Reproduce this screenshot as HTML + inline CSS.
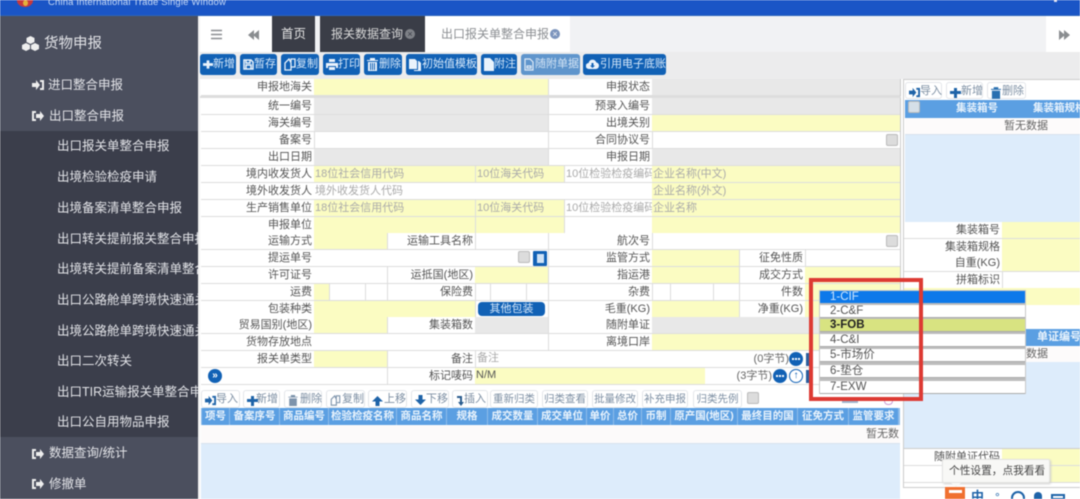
<!DOCTYPE html>
<html lang="zh"><head><meta charset="utf-8"><title>货物申报</title>
<style>
html,body{margin:0;padding:0;width:1080px;height:499px;overflow:hidden;background:#fff}
#r{position:relative;width:1080px;height:499px;overflow:hidden;filter:blur(.5px);font:11px/17px "Liberation Sans","Noto Sans CJK SC",sans-serif;color:#555}
#r div,#r span.a{position:absolute;white-space:nowrap;box-sizing:border-box}
.m{color:#e3e4e8;font-size:12.5px;line-height:18px}
.b{top:54px;height:21px;background:#1161b5;border-radius:3px;color:#d6e8fa;font-size:11px;line-height:21px;padding-left:14px}
.b svg,.t svg{position:absolute;left:3px;top:4px}
.l{text-align:right;padding-right:2px;height:17px;border-bottom:1px solid #ddd;background:#fff}
.y{background:#fbfcc2;height:17px;border-bottom:1px solid #ddd;color:#aaa;padding-left:1px}
.g{background:#e8e8e8;height:17px;border-bottom:1px solid #ddd}
.w{background:#fff;height:17px;border-bottom:1px solid #ddd;border-left:1px solid #ddd;color:#aaa;padding-left:1px}
.c{width:12px;height:12px;background:#dcdcdc;border:1px solid #bbb;border-radius:2px}
.t{top:390px;height:18px;border:1px solid #e3e6ea;border-radius:3px;background:#fff;color:#7d8fa3;font-size:11px;line-height:17px;padding-left:14px}
.tt{padding-left:0;text-align:center;font-size:10.5px}
.h{top:408px;height:17px;background:#5b9fe2;color:#e9f3fc;font-weight:bold;font-size:10.5px;line-height:17px;text-align:center}
.o{left:820px;width:205px;height:13px;background:#fff;color:#555;font-size:11.5px;line-height:13px;padding-left:10px;border-bottom:1px solid #aaa}
.ci{width:14px;height:14px;border-radius:50%;background:#1161b5}
.x{width:10px;height:10px;border-radius:50%;color:#fff;font-size:9px;line-height:10px;text-align:center}
</style></head><body><div id="r">

<!-- top bar -->
<div style="left:0;top:0;width:1080px;height:16px;background:#1a55c6;border-bottom:1px solid #2a63bb"></div>
<div style="left:17px;top:-6px;width:16px;height:13px;border-radius:50%;background:#c7393d"></div>
<div style="left:23px;top:0;width:5px;height:6px;background:#e3b23c;border-radius:50%"></div>
<div style="left:48px;top:-6px;color:#c6d9f5;font-size:9.5px;letter-spacing:.15px">China International Trade Single Window</div>
<div style="left:1054px;top:0;width:3px;height:2px;background:#dde"></div>

<!-- sidebar -->
<div style="left:0;top:16px;width:198px;height:483px;background:#4b4f5e"></div>
<div style="left:0;top:131px;width:198px;height:306px;background:#3b3e4b"></div>
<div style="left:198px;top:16px;width:2px;height:483px;background:#f3f3f3"></div>
<svg style="position:absolute;left:22px;top:36px" width="17" height="15" viewBox="0 0 17 15"><path fill="#eee" d="M8.5 0l4 2v4l-4 2-4-2V2zM4 7l4 2v4l-4 2-4-2V9zM13 7l4 2v4l-4 2-4-2V9z"/></svg>
<div class="m" style="left:44px;top:34px;font-size:14.5px;line-height:20px">货物申报</div>
<svg style="position:absolute;left:32px;top:79px" width="12" height="12" viewBox="0 0 12 12"><path fill="#eee" d="M0 4h4V1l4 5-4 5V8H0zM8 1h4v10H8v-2h2V3H8z"/></svg>
<div class="m" style="left:48px;top:76px">进口整合申报</div>
<svg style="position:absolute;left:32px;top:110px" width="12" height="12" viewBox="0 0 12 12"><path fill="#eee" d="M4 1H0v10h4V9H2V3h2zM4 4h4V1l4 5-4 5V8H4z"/></svg>
<div class="m" style="left:49px;top:107px">出口整合申报</div>
<div class="m" style="left:57px;top:137px">出口报关单整合申报</div>
<div class="m" style="left:57px;top:168px">出境检验检疫申请</div>
<div class="m" style="left:57px;top:199px">出境备案清单整合申报</div>
<div style="left:57px;top:230px;width:141px;height:18px;overflow:hidden"><span class="m">出口转关提前报关整合申报</span></div>
<div style="left:57px;top:260px;width:141px;height:18px;overflow:hidden"><span class="m">出境转关提前备案清单整合</span></div>
<div style="left:57px;top:291px;width:141px;height:18px;overflow:hidden"><span class="m">出口公路舱单跨境快速通关</span></div>
<div style="left:57px;top:322px;width:141px;height:18px;overflow:hidden"><span class="m">出境公路舱单跨境快速通关</span></div>
<div class="m" style="left:57px;top:352px">出口二次转关</div>
<div style="left:57px;top:383px;width:141px;height:18px;overflow:hidden"><span class="m">出口TIR运输报关单整合申报</span></div>
<div class="m" style="left:57px;top:413px">出口公自用物品申报</div>
<svg style="position:absolute;left:32px;top:448px" width="12" height="12" viewBox="0 0 12 12"><path fill="#eee" d="M4 1H0v10h4V9H2V3h2zM4 4h4V1l4 5-4 5V8H4z"/></svg>
<div class="m" style="left:49px;top:444px">数据查询/统计</div>
<svg style="position:absolute;left:32px;top:478px" width="12" height="12" viewBox="0 0 12 12"><path fill="#eee" d="M4 1H0v10h4V9H2V3h2zM4 4h4V1l4 5-4 5V8H4z"/></svg>
<div class="m" style="left:49px;top:475px">修撤单</div>

<!-- tabs -->
<div style="left:200px;top:16px;width:880px;height:36px;background:#f1f2f4"></div>
<div style="left:200px;top:16px;width:72px;height:36px;background:#fff"></div>
<svg style="position:absolute;left:211px;top:29px" width="11" height="11" viewBox="0 0 11 11"><path stroke="#8a8d90" stroke-width="1.6" d="M0 1.5h11M0 5.5h11M0 9.5h11"/></svg>
<svg style="position:absolute;left:248px;top:30px" width="11" height="10" viewBox="0 0 11 10"><path fill="#8a8d90" d="M6 0v10L0 5zM11 0v10L5 5z"/></svg>
<div style="left:272px;top:16px;width:43px;height:36px;background:#3a3d47;color:#e5e5e5;font-size:12.5px;line-height:36px;text-align:center">首页</div>
<div style="left:320px;top:16px;width:105px;height:36px;background:#3a3d47;color:#d8d8d8;font-size:12px;line-height:36px;padding-left:11px">报关数据查询</div>
<div class="x" style="left:405px;top:29px;background:#7e8187;color:#3a3d47">×</div>
<div style="left:425px;top:16px;width:145px;height:36px;background:#fff;color:#8c8f93;font-size:12px;line-height:36px;padding-left:16px">出口报关单整合申报</div>
<div class="x" style="left:550px;top:29px;background:#7d95bd">×</div>
<div style="left:1046px;top:16px;width:34px;height:36px;background:#fff"></div>
<svg style="position:absolute;left:1059px;top:30px" width="11" height="10" viewBox="0 0 11 10"><path fill="#8a8d90" d="M0 0v10l6-5zM5 0v10l6-5z"/></svg>

<!-- toolbar -->
<div style="left:200px;top:52px;width:880px;height:27px;background:#ececed"></div>
<div class="b" style="left:200px;width:36px;padding-left:13px"><svg width="10" height="13" viewBox="0 0 11 13"><path fill="#eaf3fc" d="M4 2h3v3h4v3H7v3H4V8H0V5h4z"/></svg>新增</div>
<div class="b" style="left:240px;width:37px"><svg width="11" height="13" viewBox="0 0 11 13"><path fill="none" stroke="#eaf3fc" stroke-width="1.5" d="M1 2h7l2 2v7H1zM3 2v3h4V2M3 11V7h5v4"/></svg>暂存</div>
<div class="b" style="left:281px;width:38px;padding-left:15px"><svg width="12" height="13" viewBox="0 0 12 13"><path fill="none" stroke="#eaf3fc" stroke-width="1.3" d="M5 1L1 5v7h6V5zM7 4V1h4v8H7"/></svg>复制</div>
<div class="b" style="left:323px;width:37px;padding-left:15px"><svg width="12" height="13" viewBox="0 0 12 13"><path fill="#eaf3fc" d="M3 1h6v3H3zM0 5h12v5h-2V8H2v2H0zM3 9h6v3H3z"/></svg>打印</div>
<div class="b" style="left:364px;width:38px;padding-left:15px"><svg width="11" height="13" viewBox="0 0 11 13"><path fill="#eaf3fc" d="M0 2h3V0h5v2h3v1H0zM1 4h9v9H1z"/><path stroke="#1161b5" d="M3.5 5v7M5.5 5v7M7.5 5v7"/></svg>删除</div>
<div class="b" style="left:406px;width:71px;padding-left:16px"><svg width="12" height="13" viewBox="0 0 12 13"><path fill="#eaf3fc" d="M0 1h6l2 2v8H0zM9 3h1l2 2v8H5v-1h4z"/></svg>初始值模板</div>
<div class="b" style="left:481px;width:36px;padding-left:13px"><svg width="10" height="13" viewBox="0 0 10 13"><path fill="#eaf3fc" d="M0 0h6l4 4v9H0z"/></svg>附注</div>
<div class="b" style="left:521px;width:59px;background:#5f95cc;color:#d2e3f4"><svg width="10" height="13" viewBox="0 0 10 13"><path fill="none" stroke="#dfeaf6" stroke-width="1.2" d="M1 1h5l3 3v8H1zM3 8h4v2H3z"/></svg>随附单据</div>
<div class="b" style="left:583px;width:83px;padding-left:17px"><svg width="13" height="13" viewBox="0 0 13 13"><path fill="#eaf3fc" d="M3 11a3 3 0 0 1-.4-6 4 4 0 0 1 7.800-.5A3.300 3.300 0 0 1 10 11z"/><path fill="#1161b5" d="M5.500 5h2v2.500H9L6.500 10 4 7.500h1.500z"/></svg>引用电子底账</div>

<!-- form -->
<div style="left:200px;top:79px;width:701px;height:306px;background:#fff;border-right:1px solid #ccc"></div>
<div style="left:200px;top:96px;width:701px;height:2px;background:#ddd"></div>

<div class="l" style="left:201px;top:79px;width:113px">申报地海关</div><div class="y" style="left:314px;top:79px;width:234px"></div><div class="l" style="left:548px;top:79px;width:104px;border-left:1px solid #ddd">申报状态</div><div class="g" style="left:652px;top:79px;width:248px"></div>
<div class="l" style="left:201px;top:98px;width:113px">统一编号</div><div class="g" style="left:314px;top:98px;width:234px"></div><div class="l" style="left:548px;top:98px;width:104px;border-left:1px solid #ddd">预录入编号</div><div class="g" style="left:652px;top:98px;width:248px"></div>
<div class="l" style="left:201px;top:115px;width:113px">海关编号</div><div class="g" style="left:314px;top:115px;width:234px"></div><div class="l" style="left:548px;top:115px;width:104px;border-left:1px solid #ddd">出境关别</div><div class="y" style="left:652px;top:115px;width:248px"></div>
<div class="l" style="left:201px;top:132px;width:113px">备案号</div><div class="w" style="left:314px;top:132px;width:234px"></div><div class="l" style="left:548px;top:132px;width:104px;border-left:1px solid #ddd">合同协议号</div><div class="w" style="left:652px;top:132px;width:248px"></div><div class="c" style="left:886px;top:134px"></div>
<div class="l" style="left:201px;top:149px;width:113px">出口日期</div><div class="g" style="left:314px;top:149px;width:234px"></div><div class="l" style="left:548px;top:149px;width:104px;border-left:1px solid #ddd">申报日期</div><div class="g" style="left:652px;top:149px;width:248px"></div>

<div class="l" style="left:201px;top:166px;width:113px">境内收发货人</div><div class="y" style="left:314px;top:166px;width:161px">18位社会信用代码</div><div class="y" style="left:475px;top:166px;width:89px;border-left:1px solid #ddd">10位海关代码</div><div class="w" style="left:564px;top:166px;width:88px;overflow:hidden">10位检验检疫编码</div><div class="y" style="left:652px;top:166px;width:248px">企业名称(中文)</div>
<div class="l" style="left:201px;top:183px;width:113px">境外收发货人</div><div class="w" style="left:314px;top:183px;width:338px;border-left:0">境外收发货人代码</div><div class="y" style="left:652px;top:183px;width:248px">企业名称(外文)</div>
<div class="l" style="left:201px;top:200px;width:113px">生产销售单位</div><div class="y" style="left:314px;top:200px;width:161px">18位社会信用代码</div><div class="y" style="left:475px;top:200px;width:89px;border-left:1px solid #ddd">10位海关代码</div><div class="w" style="left:564px;top:200px;width:88px;overflow:hidden">10位检验检疫编码</div><div class="y" style="left:652px;top:200px;width:248px">企业名称</div>
<div class="l" style="left:201px;top:217px;width:113px">申报单位</div><div class="y" style="left:314px;top:217px;width:161px"></div><div class="y" style="left:475px;top:217px;width:89px;border-left:1px solid #ddd"></div><div class="w" style="left:564px;top:217px;width:88px"></div><div class="y" style="left:652px;top:217px;width:248px"></div>

<div class="l" style="left:201px;top:233px;width:113px">运输方式</div><div class="y" style="left:314px;top:233px;width:73px"></div><div class="l" style="left:387px;top:233px;width:88px;border-left:1px solid #ddd">运输工具名称</div><div class="w" style="left:475px;top:233px;width:73px"></div><div class="l" style="left:548px;top:233px;width:104px;border-left:1px solid #ddd">航次号</div><div class="w" style="left:652px;top:233px;width:248px"></div><div class="c" style="left:886px;top:235px"></div>
<div class="l" style="left:201px;top:250px;width:113px">提运单号</div><div class="w" style="left:314px;top:250px;width:234px;border-left:0"></div><div class="c" style="left:518px;top:251px"></div><div style="left:533px;top:251px;width:14px;height:15px;background:#1161b5;border-radius:1px"></div><div style="left:537px;top:254px;width:7px;height:9px;background:#cfe2f5"></div><div class="l" style="left:548px;top:250px;width:104px;border-left:1px solid #ddd">监管方式</div><div class="y" style="left:652px;top:250px;width:87px"></div><div class="l" style="left:739px;top:250px;width:66px;border-left:1px solid #ddd">征免性质</div><div class="w" style="left:805px;top:250px;width:95px"></div>
<div class="l" style="left:201px;top:267px;width:113px">许可证号</div><div class="w" style="left:314px;top:267px;width:73px;border-left:0"></div><div class="l" style="left:387px;top:267px;width:88px;border-left:1px solid #ddd">运抵国(地区)</div><div class="y" style="left:475px;top:267px;width:73px"></div><div class="l" style="left:548px;top:267px;width:104px;border-left:1px solid #ddd">指运港</div><div class="y" style="left:652px;top:267px;width:87px"></div><div class="l" style="left:739px;top:267px;width:66px;border-left:1px solid #ddd">成交方式</div><div class="y" style="left:805px;top:267px;width:95px"></div>
<div class="l" style="left:201px;top:284px;width:113px">运费</div><div class="y" style="left:314px;top:284px;width:15px"></div><div class="w" style="left:329px;top:284px;width:36px"></div><div class="w" style="left:365px;top:284px;width:22px"></div><div class="l" style="left:387px;top:284px;width:88px;border-left:1px solid #ddd">保险费</div><div class="w" style="left:475px;top:284px;width:15px"></div><div class="w" style="left:490px;top:284px;width:36px"></div><div class="w" style="left:526px;top:284px;width:22px"></div><div class="l" style="left:548px;top:284px;width:104px;border-left:1px solid #ddd">杂费</div><div class="w" style="left:652px;top:284px;width:18px"></div><div class="w" style="left:670px;top:284px;width:43px"></div><div class="w" style="left:713px;top:284px;width:26px"></div><div class="l" style="left:739px;top:284px;width:66px;border-left:1px solid #ddd">件数</div><div class="y" style="left:805px;top:284px;width:95px"></div>
<div class="l" style="left:201px;top:301px;width:113px">包装种类</div><div class="y" style="left:314px;top:301px;width:161px"></div><div class="w" style="left:475px;top:301px;width:73px"></div><div style="left:478px;top:302px;width:67px;height:14px;background:#1161b5;border-radius:4px;color:#d6e8fa;text-align:center;line-height:14px">其他包装</div><div class="l" style="left:548px;top:301px;width:104px;border-left:1px solid #ddd">毛重(KG)</div><div class="y" style="left:652px;top:301px;width:87px"></div><div class="l" style="left:739px;top:301px;width:66px;border-left:1px solid #ddd">净重(KG)</div><div class="y" style="left:805px;top:301px;width:95px"></div>
<div class="l" style="left:201px;top:317px;width:113px">贸易国别(地区)</div><div class="y" style="left:314px;top:317px;width:73px"></div><div class="l" style="left:387px;top:317px;width:88px;border-left:1px solid #ddd">集装箱数</div><div class="g" style="left:475px;top:317px;width:73px"></div><div class="l" style="left:548px;top:317px;width:104px;border-left:1px solid #ddd">随附单证</div><div class="g" style="left:652px;top:317px;width:248px"></div>
<div class="l" style="left:201px;top:334px;width:113px">货物存放地点</div><div class="w" style="left:314px;top:334px;width:234px;border-left:0"></div><div class="l" style="left:548px;top:334px;width:104px;border-left:1px solid #ddd">离境口岸</div><div class="y" style="left:652px;top:334px;width:248px"></div>
<div class="l" style="left:201px;top:351px;width:113px">报关单类型</div><div class="y" style="left:314px;top:351px;width:73px"></div><div class="l" style="left:387px;top:351px;width:88px;border-left:1px solid #ddd">备注</div><div class="w" style="left:475px;top:351px;width:425px;line-height:14px">备注</div>
<div class="l" style="left:201px;top:368px;width:186px;height:17px"></div><div class="l" style="left:387px;top:368px;width:88px;border-left:1px solid #ddd">标记唛码</div><div class="y" style="left:475px;top:368px;width:230px;color:#555;line-height:14px">N/M</div><div class="w" style="left:705px;top:368px;width:195px;border-left:0"></div>
<div style="left:208px;top:369px;width:14px;height:14px;border-radius:50%;background:#1161b5;color:#fff;font-size:10px;line-height:13px;text-align:center;font-weight:bold">»</div>
<div style="left:720px;top:351px;width:69px;text-align:right;color:#666">(0字节)</div>
<div class="ci" style="left:789px;top:352px"></div><div style="left:792px;top:358px;width:8px;height:2px;border-top:2px dotted #fff"></div>
<div style="left:703px;top:368px;width:69px;text-align:right;color:#666">(3字节)</div>
<div class="ci" style="left:773px;top:369px"></div><div style="left:776px;top:375px;width:8px;height:2px;border-top:2px dotted #fff"></div>
<div style="left:789px;top:369px;width:14px;height:14px;border-radius:50%;border:1.5px solid #1161b5;color:#1161b5;font-size:10px;line-height:11px;text-align:center;font-weight:bold">↑</div>
<div style="left:806px;top:353px;width:6px;height:13px;background:#2a5f9e"></div>
<div style="left:806px;top:370px;width:6px;height:13px;background:#2a5f9e"></div>

<!-- lower toolbar -->
<div class="t" style="left:201px;width:39px"><svg width="11" height="11" viewBox="0 0 12 12"><path fill="#1e63a8" d="M0 4h4V1l4 5-4 5V8H0zM8 1h4v10H8v-2h2V3H8z"/></svg>导入</div>
<div class="t" style="left:243px;width:37px;padding-left:12px"><svg width="11" height="11" viewBox="0 0 11 11"><path fill="#1e63a8" d="M4 1h3v3h4v3H7v4H4V7H0V4h4z"/></svg>新增</div>
<div class="t" style="left:284px;width:38px;padding-left:15px"><svg width="10" height="11" viewBox="0 0 11 13"><path fill="#7d93ab" d="M0 2h3V0h5v2h3v1H0zM1 4h9v9H1z"/></svg>删除</div>
<div class="t" style="left:326px;width:39px;padding-left:15px"><svg width="11" height="11" viewBox="0 0 12 13"><path fill="none" stroke="#7d93ab" stroke-width="1.3" d="M5 1L1 5v7h6V5zM7 4V1h4v8H7"/></svg>复制</div>
<div class="t" style="left:368px;width:39px;padding-left:15px"><svg width="11" height="11" viewBox="0 0 11 11"><path fill="#1e63a8" d="M5.500 1L11 6.500H7.500V11h-4V6.500H0z"/></svg>上移</div>
<div class="t" style="left:411px;width:38px"><svg width="11" height="11" viewBox="0 0 11 11"><path fill="#1e63a8" d="M3.500 0h4v4.500H11L5.500 10 0 4.500h3.500z"/></svg>下移</div>
<div class="t" style="left:452px;width:36px;padding-left:11px"><svg width="9" height="11" viewBox="0 0 9 11"><path fill="#2a5c8e" d="M1 1h5v6h2L5 11 2 7h2V3H1z"/></svg>插入</div>
<div class="t tt" style="left:490px;width:48px">重新归类</div>
<div class="t tt" style="left:542px;width:46px">归类查看</div>
<div class="t tt" style="left:592px;width:46px">批量修改</div>
<div class="t tt" style="left:642px;width:46px">补充申报</div>
<div class="t tt" style="left:693px;width:49px">归类先例</div>
<div class="c" style="left:747px;top:392px"></div>

<!-- lower table -->
<div style="left:201px;top:408px;width:699px;height:17px;background:#8fbde9"></div>
<div class="h" style="left:202px;width:27px">项号</div><div class="h" style="left:230px;width:49px">备案序号</div><div class="h" style="left:280px;width:48px">商品编号</div><div class="h" style="left:329px;width:67px">检验检疫名称</div><div class="h" style="left:397px;width:49px">商品名称</div><div class="h" style="left:447px;width:40px">规格</div><div class="h" style="left:488px;width:49px">成交数量</div><div class="h" style="left:538px;width:48px">成交单位</div><div class="h" style="left:587px;width:26px">单价</div><div class="h" style="left:614px;width:27px">总价</div><div class="h" style="left:642px;width:28px">币制</div><div class="h" style="left:671px;width:66px">原产国(地区)</div><div class="h" style="left:738px;width:59px">最终目的国</div><div class="h" style="left:798px;width:50px">征免方式</div><div class="h" style="left:849px;width:49px">监管要求</div>
<div style="left:201px;top:425px;width:699px;height:19px;background:#fcfafa;border-bottom:1px solid #d8e2ee;text-align:right;line-height:19px;color:#666;padding-right:1px">暂无数</div>
<div style="left:201px;top:444px;width:699px;height:55px;background:#ddecfb"></div>

<!-- right panel -->
<div style="left:903px;top:79px;width:177px;height:420px;background:#fff;border-left:1px solid #ccc;border-top:1px solid #ccc"></div>
<div class="t" style="top:82px;left:905px;width:37px;height:17px"><svg width="11" height="11" viewBox="0 0 12 12"><path fill="#1e63a8" d="M0 4h4V1l4 5-4 5V8H0zM8 1h4v10H8v-2h2V3H8z"/></svg>导入</div>
<div class="t" style="top:82px;left:946px;width:37px;height:17px"><svg width="11" height="11" viewBox="0 0 11 11"><path fill="#1e63a8" d="M4 1h3v3h4v3H7v4H4V7H0V4h4z"/></svg>新增</div>
<div class="t" style="top:82px;left:987px;width:39px;height:17px"><svg width="10" height="12" viewBox="0 0 11 13"><path fill="#2a70b0" d="M0 2h3V0h5v2h3v1H0zM1 4h9v9H1z"/></svg>删除</div>
<div style="left:905px;top:100px;width:175px;height:18px;background:#5b9fe2"></div>
<div class="c" style="left:908px;top:101px;background:#d5dfe8"></div>
<div class="h" style="left:924px;top:100px;width:106px;height:18px">集装箱号</div>
<div class="h" style="left:1033px;top:100px;width:47px;height:18px;overflow:hidden;text-align:left">集装箱规格</div>
<div style="left:905px;top:118px;width:175px;height:17px;background:#fdfbfb;border-bottom:1px solid #d8e2ee;line-height:17px;padding-left:99px;color:#666">暂无数据</div>
<div style="left:905px;top:135px;width:175px;height:87px;background:#ddecfb"></div>

<div class="l" style="left:904px;top:222px;width:98px">集装箱号</div><div class="y" style="left:1002px;top:222px;width:78px"></div>
<div class="l" style="left:904px;top:239px;width:98px">集装箱规格</div><div class="y" style="left:1002px;top:239px;width:78px"></div>
<div class="l" style="left:904px;top:255px;width:98px">自重(KG)</div><div class="y" style="left:1002px;top:255px;width:78px"></div>
<div class="l" style="left:904px;top:272px;width:98px">拼箱标识</div><div class="w" style="left:1002px;top:272px;width:78px"></div>
<div style="left:904px;top:288px;width:176px;height:17px;background:#fbfcc2"></div>

<div style="left:1026px;top:329px;width:54px;height:17px;background:#5b9fe2;color:#e9f3fc;font-weight:bold;line-height:17px;padding-left:11px">单证编号</div>
<div style="left:1026px;top:346px;width:54px;height:16px;background:#fdfbfb;line-height:16px;color:#666">数据</div>
<div style="left:904px;top:362px;width:176px;height:87px;background:#ddecfb;border-bottom:1px solid #ccc"></div>
<div class="l" style="left:904px;top:449px;width:98px">随附单证代码</div><div class="y" style="left:1002px;top:449px;width:78px"></div>
<div class="l" style="left:904px;top:466px;width:98px">随</div><div class="y" style="left:1002px;top:466px;width:78px"></div>
<div style="left:903px;top:487px;width:177px;height:12px;border-top:1px solid #ccc;background:#fff"></div>

<!-- dropdown -->
<div style="left:819px;top:290px;width:207px;height:104px;background:#bdbdbd;border:1px solid #c8c8c8"></div>
<div class="o" style="top:291px;background:#0d79ea;color:#cfe7ff;border:0;height:12px;line-height:12px">1-CIF</div>
<div class="o" style="top:305px">2-C&amp;F</div>
<div class="o" style="top:319px;background:#d8e381;color:#222;font-weight:bold;height:13px">3-FOB</div>
<div class="o" style="top:334px">4-C&amp;I</div>
<div class="o" style="top:349px">5-市场价</div>
<div class="o" style="top:365px">6-垫仓</div>
<div class="o" style="top:381px">7-EXW</div>

<!-- red highlight -->
<div style="left:809px;top:278px;width:114px;height:123px;border:4px solid #dd3a33"></div>
<div style="left:842px;top:401px;width:16px;height:2px;background:#9fb6cf"></div>
<div style="left:884px;top:401px;width:9px;height:4px;border-radius:0 0 5px 5px;border:1px solid #c99bd4;border-top:0"></div>

<!-- input method toolbar and tooltip -->
<div style="left:945px;top:487px;width:20px;height:12px;background:#f07030"></div>
<div style="left:949px;top:490px;width:13px;height:3px;background:#fff"></div>
<div style="left:971px;top:488px;color:#1e63a8;font-size:13px;font-weight:bold">中</div>
<div style="left:995px;top:489px;color:#1e63a8;font-size:12px">°,</div>
<div style="left:1011px;top:491px;width:14px;height:14px;border:2px solid #1e63a8;border-radius:50%"></div>
<div style="left:1034px;top:492px;width:8px;height:9px;background:#1e63a8;border-radius:4px 4px 0 0"></div>
<div style="left:1051px;top:494px;width:14px;height:6px;border:2px solid #1e63a8"></div>
<div style="left:942px;top:459px;width:108px;height:24px;background:#f8f8f6;border:1px solid #e4e4e2;box-shadow:1px 1px 2px #ccc;border-radius:2px;color:#444;font-size:10.700px;line-height:22px;padding-left:6px">个性设置，点我看看</div>
<div style="left:951px;top:483px;width:0;height:0;border-left:5px solid transparent;border-right:5px solid transparent;border-top:4px solid #f8f8f6"></div>
</div></body></html>
